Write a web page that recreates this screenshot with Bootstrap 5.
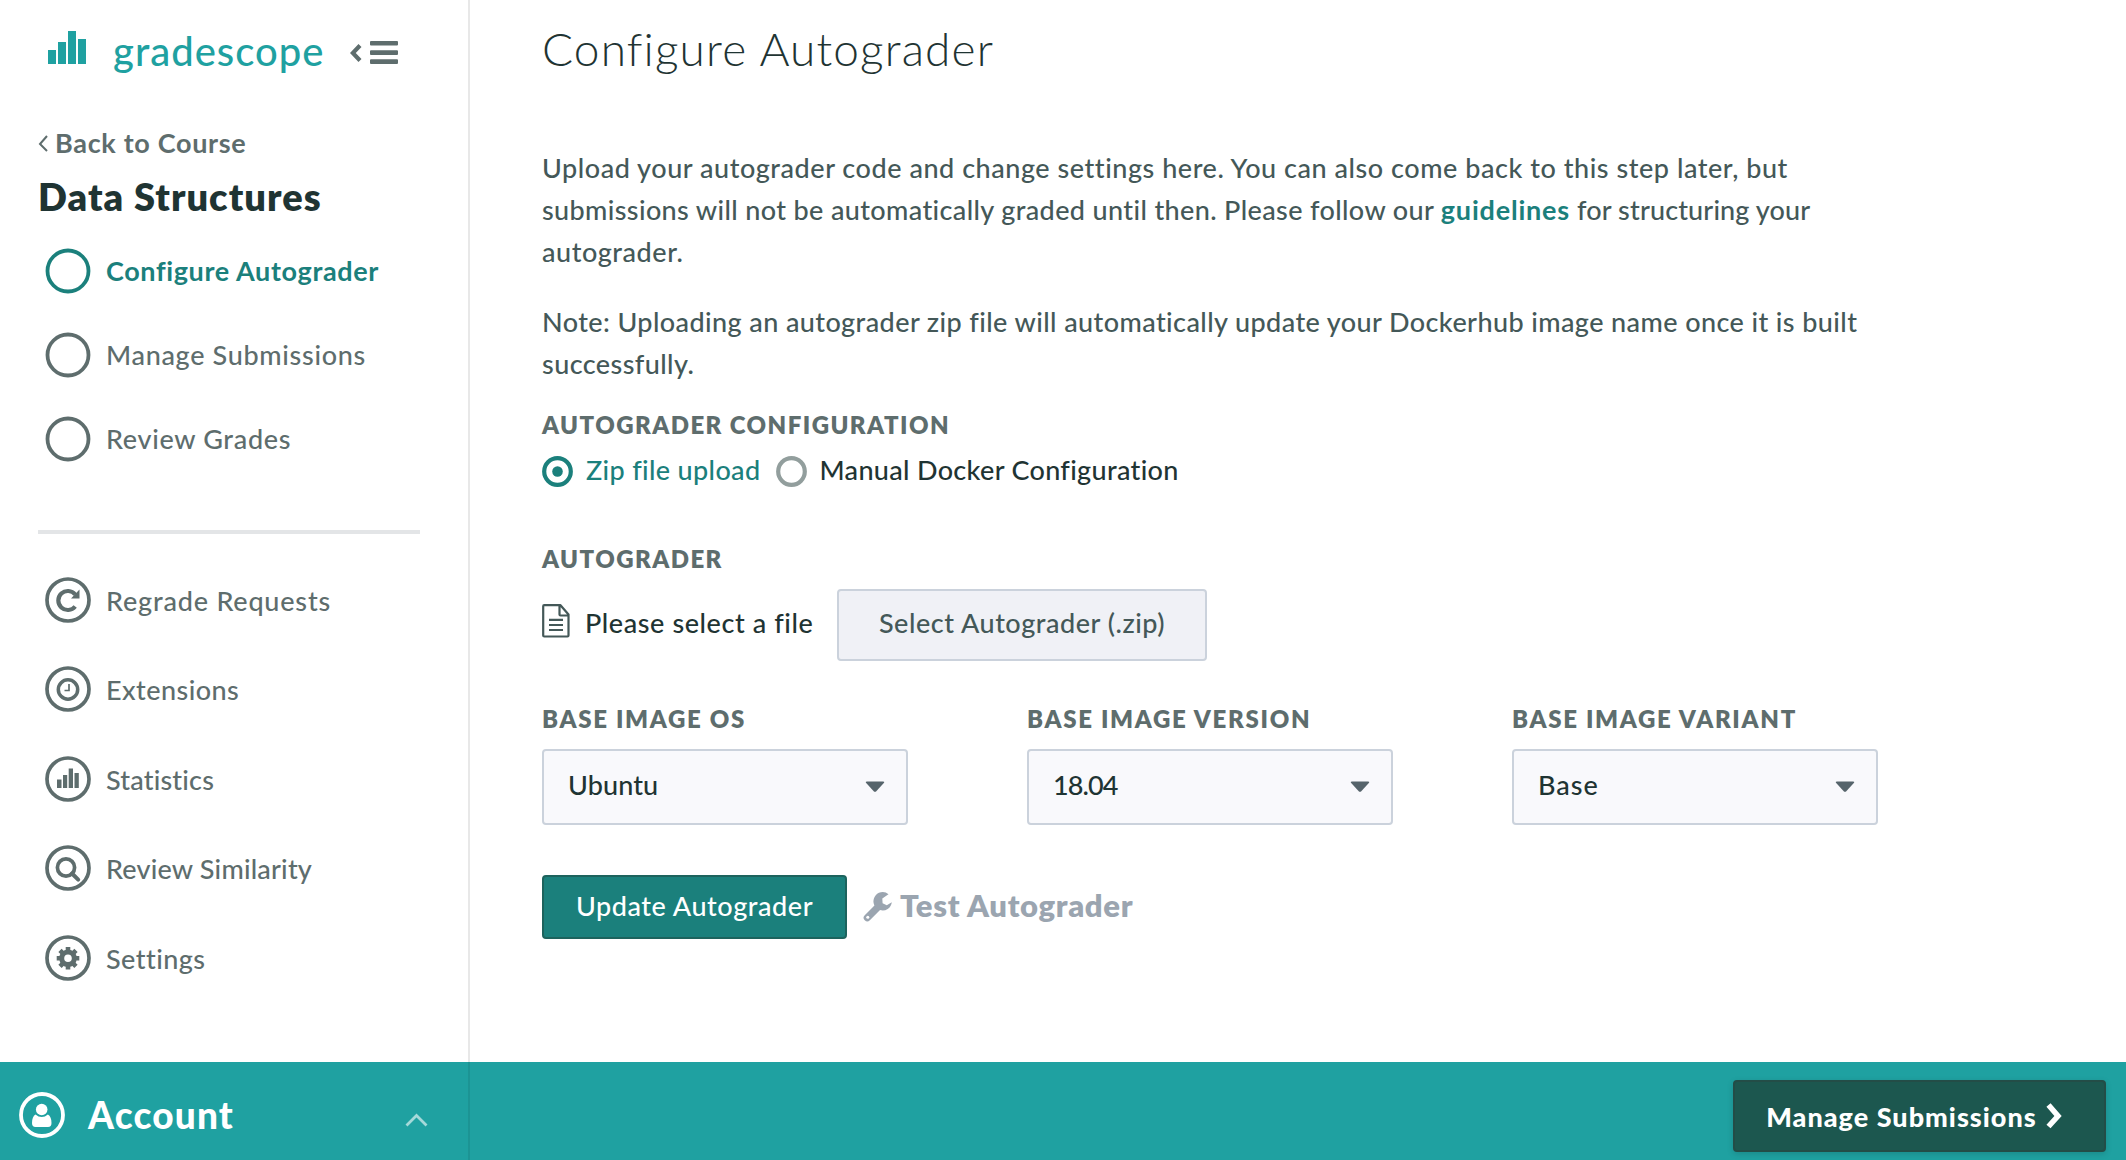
<!DOCTYPE html>
<html lang="en">
<head>
<meta charset="utf-8">
<meta name="viewport" content="width=device-width, initial-scale=1">
<title>Configure Autograder | Gradescope</title>
<link href="https://cdn.jsdelivr.net/npm/bootstrap@5.3.0/dist/css/bootstrap.min.css" rel="stylesheet">
<style>
  :root { --gs-teal:#1fa1a1; --gs-dark-teal:#1b807c; --gs-gray:#5e6d6d; --gs-ink:#1f3433; --gs-text:#445858; --gs-line:#cbd2dc; }
  body { font-family:Lato,"Open Sans",sans-serif; font-size:27px; font-weight:500; line-height:32px; color:var(--gs-ink); background:#fff; height:1160px; overflow:hidden; }
  svg { display:block; flex:none; }
  .side { width:470px; border-right:2px solid #e8e8e8; padding:25px 48px 0 38px; }
  .brand { height:48px; padding-left:10px; }
  .brand-bars { margin-top:6px; }
  .brand-name { color:var(--gs-teal); font-size:40px; line-height:48px; letter-spacing:1px; margin:2px 0 0 26px; width:237px; }
  .brand-toggle { margin-top:16px; }
  .back { color:var(--gs-gray); font-weight:700; letter-spacing:.68px; margin-top:53px; gap:7px; }
  .back span { padding-top:1px; }
  .course { font-size:38px; line-height:46px; font-weight:800; letter-spacing:1.03px; margin:14px 0 10px; }
  .step { height:84px; padding-left:7px; color:var(--gs-gray); gap:15px; text-decoration:none; }
  .step svg { margin-bottom:1px; }
  .step span { padding-bottom:1px; letter-spacing:.68px; }
  .step.on { color:var(--gs-dark-teal); font-weight:700; }
  .step.on span { letter-spacing:.62px; }
  .tool { height:89.5px; padding-left:7px; color:var(--gs-gray); gap:15px; text-decoration:none; }
  .tool svg { margin-bottom:1px; }
  .tool span { letter-spacing:.45px; padding-top:1px; }
  .rule { height:4px; background:#e3e5e7; margin:48.5px 0 22px; }
  .content { padding:21px 0 0 72px; width:1410px; }
  h1 { font-size:46px; line-height:56px; font-weight:300; letter-spacing:1.15px; margin:0 0 69.5px; }
  .copy { color:var(--gs-text); line-height:42px; letter-spacing:.54px; margin:0 0 28px; white-space:nowrap; }
  .copy.tight { letter-spacing:.41px; margin-bottom:24.2px; }
  .copy a { color:var(--gs-dark-teal); font-weight:700; text-decoration:none; letter-spacing:.8px; }
  .eyebrow { font-size:24px; line-height:28px; padding-top:2px; font-weight:800; color:var(--gs-gray); letter-spacing:1.45px; white-space:nowrap; }
  .gs-field .eyebrow { letter-spacing:1.7px; }
  .up { letter-spacing:.5px; white-space:nowrap; }
  .up span { padding-bottom:3.500px; }
  .pick { margin-top:16.6px; height:32px; }
  .gs-btn { border:2px solid var(--gs-line); border-radius:4px; padding:0; display:flex; align-items:center; justify-content:center; font-size:27px; font-weight:500; line-height:32px; }
  .gs-file { background:#f0f1f6; color:var(--gs-text); width:370px; height:72px; margin-left:25px; }
  .gs-field { width:366px; }
  .gs-select { height:76px; background:#f9f9fc; border:2px solid var(--gs-line); border-radius:4px; padding:0 21px 0 24px; margin-top:15.3px; }
  .gs-update { width:305px; height:64px; background:var(--gs-dark-teal); border-color:#1d635d; color:#fff; letter-spacing:.55px; }
  .gs-update span { padding-bottom:2px; }
  .gs-test { color:#9ba5b0; font-size:31px; line-height:38px; font-weight:800; letter-spacing:.65px; margin-left:16px; gap:8px; }
  .gs-test span { padding-bottom:3px; }
  .foot { height:98px; background:var(--gs-teal); color:#fff; }
  .acct { width:470px; border-right:2px solid rgba(0,0,0,.08); padding:8px 40px 0 19px; }
  .acct b { font-size:37px; line-height:44px; font-weight:900; letter-spacing:1.2px; margin-left:23px; }
  .gs-next { width:373px; height:72px; margin:18px 20px 0 auto; background:#1c574f; border-color:#234d47; color:#fff; font-weight:900; letter-spacing:1.02px; gap:8px; box-shadow:0 2px 6px rgba(0,0,0,.15); padding-right:10px; }
  .gs-next span { padding-top:1px; }
</style>
<script src="https://cdn.jsdelivr.net/npm/bootstrap@5.3.0/dist/js/bootstrap.bundle.min.js"></script>
</head>
<body class="d-flex flex-column">
<div class="d-flex flex-grow-1">
  <nav class="side flex-shrink-0">
    <div class="brand d-flex align-items-start">
      <svg class="brand-bars" width="39" height="33" viewBox="0 0 39 33" fill="#1fa1a1"><path d="M0 19h8v14H0zM10 11h8v22h-8zM20 0h8v33h-8zM30 8h8v25h-8z"/></svg>
      <div class="brand-name">gradescope</div>
      <svg class="brand-toggle" width="49" height="24" viewBox="0 0 49 24"><path d="M10 4.500L2.800 12l7.200 7.500" fill="none" stroke="#5e6d6d" stroke-width="4.200"/><path d="M21 0h26q1 0 1 1v2.500q0 1-1 1H21q-1 0-1-1V1q0-1 1-1zM21 9.200h26q1 0 1 1v2.800q0 1-1 1H21q-1 0-1-1v-2.800q0-1 1-1zM21 18.300h26q1 0 1 1V22q0 1-1 1H21q-1 0-1-1v-2.700q0-1 1-1z" fill="#5e6d6d"/></svg>
    </div>
    <div class="back d-flex align-items-center">
      <svg width="10" height="18" viewBox="0 0 10 18"><path d="M9 2L2 10l7 7" fill="none" stroke="#5e6d6d" stroke-width="2"/></svg><span>Back to Course</span>
    </div>
    <div class="course">Data Structures</div>
    <a href="#" class="step on d-flex align-items-center"><svg width="46" height="46"><circle cx="23" cy="23" r="20.500" fill="none" stroke="currentColor" stroke-width="3.800"/></svg><span>Configure Autograder</span></a>
    <a href="#" class="step d-flex align-items-center"><svg width="46" height="46"><circle cx="23" cy="23" r="20.500" fill="none" stroke="currentColor" stroke-width="3.800"/></svg><span>Manage Submissions</span></a>
    <a href="#" class="step d-flex align-items-center"><svg width="46" height="46"><circle cx="23" cy="23" r="20.500" fill="none" stroke="currentColor" stroke-width="3.800"/></svg><span>Review Grades</span></a>
    <div class="rule"></div>
    <a href="#" class="tool d-flex align-items-center"><svg width="46" height="46" fill="none" stroke="currentColor"><circle cx="23" cy="23" r="21" stroke-width="3.700"/><path d="M30.200 29.500A9.500 9.500 0 1 1 30.200 17.500" stroke-width="4.200"/><path d="M34.500 12.500v9h-8.500z" fill="currentColor" stroke="none"/></svg><span style="letter-spacing:.8px">Regrade Requests</span></a>
    <a href="#" class="tool d-flex align-items-center"><svg width="46" height="46" fill="none" stroke="currentColor"><circle cx="23" cy="23" r="21" stroke-width="3.700"/><circle cx="23" cy="23.500" r="9.700" stroke-width="3.500"/><path d="M24 18v6.500h-4.500" stroke-width="1.700"/></svg><span>Extensions</span></a>
    <a href="#" class="tool d-flex align-items-center"><svg width="46" height="46" fill="none" stroke="currentColor"><circle cx="23" cy="23" r="21" stroke-width="3.700"/><path d="M12 23.500h4.500V32H12zM18 19h4.200v13H18zM23.700 12.500H28V32h-4.300zM29.500 17h4.300v15h-4.300z" fill="currentColor" stroke="none"/></svg><span style="letter-spacing:.18px">Statistics</span></a>
    <a href="#" class="tool d-flex align-items-center"><svg width="46" height="46" fill="none" stroke="currentColor"><circle cx="23" cy="23" r="21" stroke-width="3.700"/><circle cx="21" cy="22.500" r="8.600" stroke-width="3.700"/><path d="M27 28.500l6.200 6.200" stroke-width="4" stroke-linecap="round"/></svg><span style="letter-spacing:.2px">Review Similarity</span></a>
    <a href="#" class="tool d-flex align-items-center"><svg width="46" height="46" fill="none" stroke="currentColor"><circle cx="23" cy="23" r="21" stroke-width="3.700"/><circle cx="23" cy="23.300" r="6.300" stroke-width="5"/><path d="M23 12v4M23 30.600v4M11.700 23.300h4M30.300 23.300h4M15 15.300l3 3M28 28.300l3 3M15 31.300l3-3M28 18.300l3-3" stroke-width="4.600"/></svg><span>Settings</span></a>
  </nav>

  <main class="content flex-shrink-0">
    <h1>Configure Autograder</h1>
    <p class="copy">Upload your autograder code and change settings here. You can also come back to this step later, but<br><span style="letter-spacing:.37px">submissions will not be automatically graded until then. Please follow our </span><a href="#">guidelines</a><span style="letter-spacing:.14px"> for structuring your</span><br>autograder.</p>
    <p class="copy tight">Note: Uploading an autograder zip file will automatically update your Dockerhub image name once it is built<br>successfully.</p>

    <div class="eyebrow">AUTOGRADER CONFIGURATION</div>
    <div class="pick up d-flex align-items-center">
      <svg width="31" height="31"><circle cx="15.500" cy="15.500" r="13.300" fill="none" stroke="#1b807c" stroke-width="4.200"/><circle cx="15.500" cy="15.500" r="5.300" fill="#1b807c"/></svg>
      <span style="color:#1b807c;letter-spacing:.35px;width:190px;padding-left:13px;margin-right:13px">Zip file upload</span>
      <svg width="31" height="31"><circle cx="15.500" cy="15.500" r="13.300" fill="none" stroke="#929e9d" stroke-width="4.200"/></svg>
      <span style="letter-spacing:.32px;padding-left:12.500px">Manual Docker Configuration</span>
    </div>

    <div class="eyebrow" style="margin-top:56px">AUTOGRADER</div>
    <div class="up d-flex align-items-center" style="margin-top:15.300px">
      <svg width="28" height="34" viewBox="0 0 28 34" style="margin-bottom:7px" fill="none" stroke="#445858" stroke-width="2.200"><path d="M1.200 2.200q0-1 1-1H18.500L26.500 10.500V31.500q0 1-1 1H2.200q-1 0-1-1zM17.500 1.200v9.300q0 1 1 1h8M7 15.800h14M7 21h14M7 26h14" stroke-linejoin="round"/></svg>
      <span style="padding-left:15px;letter-spacing:.58px;width:242px">Please select a file</span>
      <button class="gs-btn gs-file"><span style="letter-spacing:.53px">Select Autograder (.zip)</span></button>
    </div>

    <div class="d-flex" style="gap:119px;margin-top:42.700px">
      <div class="gs-field"><div class="eyebrow">BASE IMAGE OS</div><div class="gs-select up d-flex align-items-center justify-content-between"><span style="letter-spacing:.1px">Ubuntu</span><svg width="20" height="11"><path d="M2 .500h16q2 0 .800 1.500l-7.500 8.200q-1.300 1-2.600 0L1.200 2Q0 .500 2 .500z" fill="#56646b"/></svg></div></div>
      <div class="gs-field"><div class="eyebrow">BASE IMAGE VERSION</div><div class="gs-select up d-flex align-items-center justify-content-between"><span style="letter-spacing:-.9px">18.04</span><svg width="20" height="11"><path d="M2 .500h16q2 0 .800 1.500l-7.500 8.200q-1.300 1-2.600 0L1.200 2Q0 .500 2 .500z" fill="#56646b"/></svg></div></div>
      <div class="gs-field"><div class="eyebrow">BASE IMAGE VARIANT</div><div class="gs-select up d-flex align-items-center justify-content-between"><span style="letter-spacing:1px">Base</span><svg width="20" height="11"><path d="M2 .500h16q2 0 .800 1.500l-7.500 8.200q-1.300 1-2.600 0L1.200 2Q0 .500 2 .500z" fill="#56646b"/></svg></div></div>
    </div>

    <div class="d-flex align-items-center" style="margin-top:50px">
      <button class="gs-btn gs-update"><span>Update Autograder</span></button>
      <div class="gs-test d-flex align-items-center">
        <svg width="29" height="30" viewBox="0 0 29 30"><path d="M4.300 25.700L16 14" fill="none" stroke="#9ba5b0" stroke-width="7.200" stroke-linecap="round"/><path d="M25.500 2.200A9.200 9.200 0 1 0 28.800 10.300L23.800 13.200 19.600 11.200 19.300 6.500z" fill="#9ba5b0"/><circle cx="4.800" cy="25.200" r="1.500" fill="#fff"/></svg>
        <span>Test Autograder</span>
      </div>
    </div>
  </main>
</div>

<footer class="foot d-flex flex-shrink-0">
  <div class="acct d-flex align-items-center">
    <svg width="46" height="46" style="margin-bottom:1px"><circle cx="23" cy="23" r="21" fill="none" stroke="#fff" stroke-width="3.800"/><circle cx="22.700" cy="17.500" r="5.800" fill="#fff"/><path d="M16.500 22.500Q19.500 25 22.700 25t6.200-2.500Q32.500 24.500 32.500 31q0 4-3.500 4H16.500Q13 35 13 31q0-6.500 3.500-8.500z" fill="#fff"/></svg>
    <b>Account</b>
    <svg class="ms-auto" width="23" height="14" style="margin-top:10px"><path d="M1.500 12.500l10-10 10 10" fill="none" stroke="#a5d9d9" stroke-width="2.800"/></svg>
  </div>
  <button class="gs-btn gs-next"><span>Manage Submissions</span><svg width="18" height="28"><path d="M3.500 3L13 14l-9.500 10.500" fill="none" stroke="#fff" stroke-width="5.500"/></svg></button>
</footer>
</body>
</html>
